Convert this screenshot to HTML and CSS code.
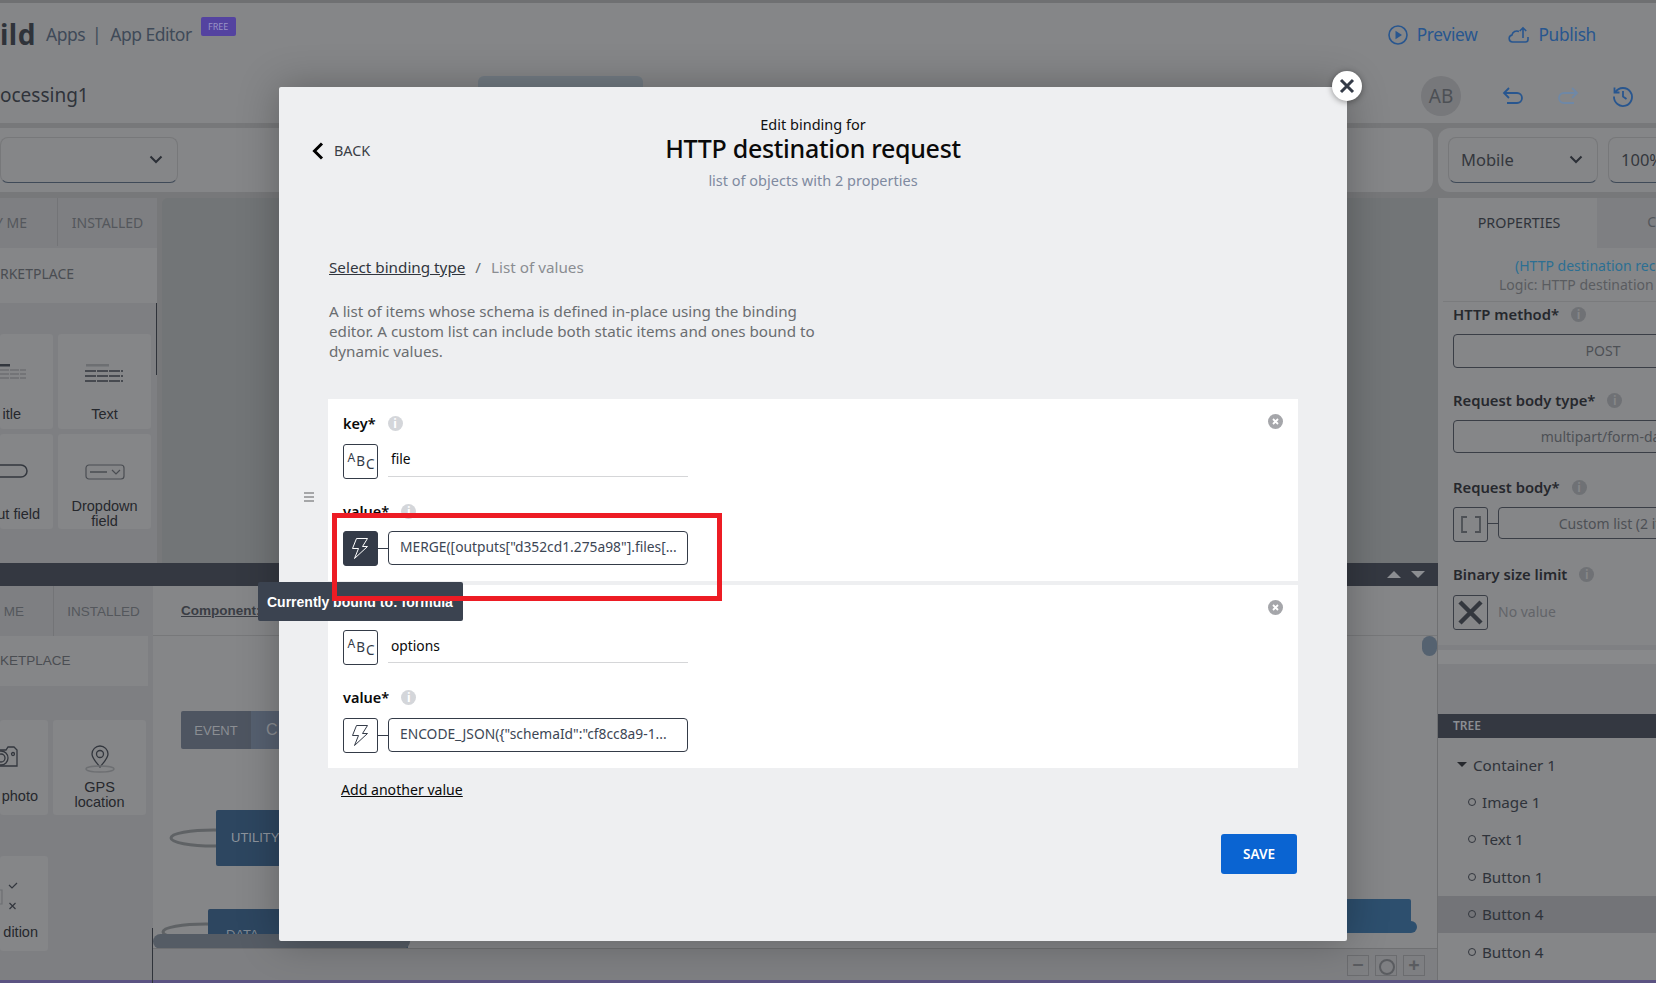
FILE: index.html
```html
<!DOCTYPE html>
<html lang="en">
<head>
    <meta charset="UTF-8">
    <title>App Editor - Edit binding</title>
    <link rel="stylesheet" href="styles.css">
</head>
<body>
<div class="app">
    <div class="top-line"></div>
    <header class="header">
        <div class="brand">
            <span class="brand-name">ild</span>
            <span class="brand-crumb">Apps</span>
            <span class="brand-crumb brand-sep">|</span>
            <span class="brand-crumb">App Editor</span>
            <span class="free-badge">FREE</span>
        </div>
        <div class="header-actions">
            <span class="header-action">
                <svg width="20" height="20" viewBox="0 0 20 20" fill="none" stroke="#28568f" stroke-width="1.6"><circle cx="10" cy="10" r="9"/><path d="M7.500 5.800 14 10l-6.500 4.200z" fill="#28568f" stroke="none"/></svg>
                Preview
            </span>
            <span class="header-action">
                <svg width="21" height="20" viewBox="0 0 21 20" fill="none" stroke="#28568f" stroke-width="1.6"><path d="M6 17H4.500a3.500 3.500 0 0 1-.6-6.900A5 5 0 0 1 11 6.500M20 12v2.500a2.500 2.500 0 0 1-2.500 2.500H6M15 13V3M11.800 6 15 2.800 18.200 6"/></svg>
                Publish
            </span>
        </div>
    </header>

    <div class="subheader">
        <span class="app-name">ocessing1</span>
        <span class="logic-tab"></span>
        <div class="subheader-tools">
            <span class="avatar">AB</span>
            <svg class="tool-icon" width="22" height="22" viewBox="0 0 22 22" fill="none" stroke="#28568f" stroke-width="1.8"><path d="M7 3 2 8l5 5M2 8h13a5 5 0 0 1 0 10H5"/></svg>
            <svg class="tool-icon" width="22" height="22" viewBox="0 0 22 22" fill="none" stroke="#6f88a6" stroke-width="1.800"><path d="m15 3 5 5-5 5M20 8H7a5 5 0 0 0 0 10h10"/></svg>
            <svg class="tool-icon" width="22" height="22" viewBox="0 0 22 22" fill="none" stroke="#28568f" stroke-width="1.8"><path d="M3.500 7A9 9 0 1 1 2 11.500M2.500 2.500V7.500H7.500M11 6v5.500l3.500 2.500"/></svg>
        </div>
    </div>

    <div class="toolbar">
        <div class="toolbar-left">
            <div class="select select-page">
                <svg class="chevron" width="14" height="9" viewBox="0 0 14 9" fill="none" stroke="#2b2f36" stroke-width="2"><path d="m1.500 1.500 5.500 5.500 5.500-5.500"/></svg>
            </div>
        </div>
        <div class="toolbar-right">
            <div class="select select-device">
                <span>Mobile</span>
                <svg class="chevron" width="14" height="9" viewBox="0 0 14 9" fill="none" stroke="#2b2f36" stroke-width="2"><path d="m1.500 1.500 5.500 5.500 5.500-5.500"/></svg>
            </div>
            <div class="select select-zoom"><span>100%</span></div>
        </div>
    </div>

    <div class="main">
        <div class="work">
            <div class="work-upper">
                <aside class="palette">
                    <div class="tabs">
                        <span class="tab tab-first">Y ME</span>
                        <span class="tab tab-second">INSTALLED</span>
                    </div>
                    <div class="market">RKETPLACE</div>
                    <div class="comp-grid">
                        <div class="comp comp-cut">
                            <svg width="26" height="22" viewBox="0 0 26 22" fill="none"><path d="M0 1h10" stroke="#33373e" stroke-width="3"/><path d="M0 6h26M0 10h26M0 14h26" stroke="#6d6f72" stroke-width="1.500" stroke-dasharray="9 1"/></svg>
                            <span class="comp-label comp-label-title">itle</span>
                        </div>
                        <div class="comp">
                            <svg width="40" height="22" viewBox="0 0 40 22" fill="none"><path d="M1 1h23" stroke="#6d6f72" stroke-width="3"/><path d="M0 7h38M0 12h38M0 17h38" stroke="#33373e" stroke-width="1.500" stroke-dasharray="11 1"/></svg>
                            <span class="comp-label">Text</span>
                        </div>
                        <div class="comp comp-cut">
                            <svg width="28" height="14" viewBox="0 0 28 14" fill="none" stroke="#33373e" stroke-width="1.500"><path d="M0 1h21a6 6 0 0 1 0 12H0"/></svg>
                            <span class="comp-label comp-label-input">ut field</span>
                        </div>
                        <div class="comp">
                            <svg width="40" height="16" viewBox="0 0 40 16" fill="none" stroke="#4a4d52" stroke-width="1.200"><rect x="1" y="1" width="38" height="14" rx="3"/><path d="M5 8h17" stroke-width="1.500"/><path d="m27 6 4 4 4-4"/></svg>
                            <span class="comp-label comp-label-two">Dropdown<br>field</span>
                        </div>
                    </div>
                    <span class="palette-scroll"></span>
                </aside>
                <div class="canvas-upper"></div>
            </div>

            <div class="split-bar">
                <span class="split-up"></span>
                <span class="split-down"></span>
            </div>

            <div class="work-lower">
                <aside class="palette palette-lower">
                    <div class="tabs tabs-lower">
                        <span class="tab tab-first">ME</span>
                        <span class="tab tab-second">INSTALLED</span>
                    </div>
                    <div class="market market-lower">KETPLACE</div>
                    <div class="comp-grid comp-grid-lower">
                        <div class="comp comp-cut">
                            <svg width="18" height="24" viewBox="0 0 18 24" fill="none" stroke="#33373e" stroke-width="1.300"><path d="M0 5h6l2-3h6l3 3v16H0"/><circle cx="1" cy="13" r="7"/><circle cx="1" cy="13" r="4"/><circle cx="13" cy="9" r="1.500"/></svg>
                            <span class="comp-label comp-label-low">photo</span>
                        </div>
                        <div class="comp">
                            <svg width="30" height="28" viewBox="0 0 30 28" fill="none" stroke="#33373e" stroke-width="1.300"><path d="M15 22c-5-6-8-9-8-13a8 8 0 0 1 16 0c0 4-3 7-8 13z"/><circle cx="15" cy="9" r="3.500"/><ellipse cx="15" cy="24" rx="14" ry="3" stroke="#6d6f72"/></svg>
                            <span class="comp-label comp-label-gps">GPS<br>location</span>
                        </div>
                        <div class="comp comp-cut">
                            <svg width="18" height="30" viewBox="0 0 18 30" fill="none" stroke="#33373e" stroke-width="1.200"><path d="m9 4 3 3 5-5M9.500 22l6 6m0-6-6 6"/><path d="M0 9h2v14H0" stroke="#6d6f72"/></svg>
                            <span class="comp-label comp-label-low">dition</span>
                        </div>
                    </div>
                    <span class="palette-scroll palette-scroll-lower"></span>
                </aside>
                <div class="canvas-lower">
                    <div class="canvas-tabs"><span class="canvas-crumb">Component: B</span></div>
                    <div class="event-switch"><span class="event-on">EVENT</span><span class="event-off">C</span></div>
                    <svg class="node-loop node-loop-a" width="60" height="30" viewBox="0 0 60 30" fill="none" stroke="#5f6265" stroke-width="3"><ellipse cx="45" cy="15" rx="43" ry="8"/></svg>
                    <div class="node node-utility">UTILITY</div>
                    <svg class="node-loop node-loop-b" width="60" height="20" viewBox="0 0 60 20" fill="none" stroke="#5f6265" stroke-width="3"><ellipse cx="45" cy="12" rx="43" ry="8"/></svg>
                    <div class="node node-data">DATA</div>
                    <div class="node node-right"><span class="node-port"></span></div>
                    <span class="canvas-thumb"></span>
                    <span class="canvas-hscroll"></span>
                    <div class="canvas-footer">
                        <span class="zoom-btn">&minus;</span>
                        <span class="zoom-btn zoom-btn-o"></span>
                        <span class="zoom-btn">+</span>
                    </div>
                </div>
            </div>
        </div>

        <aside class="props">
            <div class="props-tabs">
                <span class="props-tab">PROPERTIES</span>
                <span class="props-tab-off">C</span>
            </div>
            <div class="props-title">
                <div class="props-link">(HTTP destination rec</div>
                <div class="props-logic">Logic: HTTP destination</div>
            </div>
            <div class="props-fields">
                <div class="prop-label">HTTP method* <i class="info info-dim">i</i></div>
                <div class="prop-box prop-box-method">POST</div>
                <div class="prop-label">Request body type* <i class="info info-dim">i</i></div>
                <div class="prop-box prop-box-type">multipart/form-data</div>
                <div class="prop-label">Request body* <i class="info info-dim">i</i></div>
                <div class="prop-row">
                    <span class="prop-icon prop-icon-text">
                        <svg width="20" height="17" viewBox="0 0 20 17" fill="none" stroke="#4d5055" stroke-width="1.800"><path d="M6 1H1v15h5M14 1h5v15h-5"/></svg>
                    </span>
                    <span class="prop-link"></span>
                    <span class="prop-box prop-box-list">Custom list (2 items)</span>
                </div>
                <div class="prop-label">Binary size limit <i class="info info-dim">i</i></div>
                <div class="prop-row prop-row-last">
                    <span class="prop-icon">
                        <svg width="27" height="27" viewBox="0 0 27 27" fill="none" stroke="#33373e" stroke-width="4.500"><path d="m3 3 21 21M24 3 3 24"/></svg>
                    </span>
                    <span class="no-value">No value</span>
                </div>
            </div>
            <div class="props-rule"></div>
            <div class="props-gap"></div>
            <div class="tree-bar">TREE</div>
            <ul class="tree">
                <li class="tree-item tree-root"><span class="tree-caret"></span>Container 1</li>
                <li class="tree-item"><span class="tree-dot"></span>Image 1</li>
                <li class="tree-item"><span class="tree-dot"></span>Text 1</li>
                <li class="tree-item"><span class="tree-dot"></span>Button 1</li>
                <li class="tree-item tree-selected"><span class="tree-dot"></span>Button 4</li>
                <li class="tree-item"><span class="tree-dot"></span>Button 4</li>
            </ul>
        </aside>
    </div>
    <div class="bottom-strip"></div>
</div>

<div class="modal">
    <button class="modal-close">
        <svg width="16" height="16" viewBox="0 0 16 16" fill="none" stroke="#343b48" stroke-width="3"><path d="m2 2 12 12M14 2 2 14"/></svg>
    </button>

    <div class="modal-head">
        <div class="back">
            <svg width="12" height="18" viewBox="0 0 12 18" fill="none" stroke="#000" stroke-width="3"><path d="M10 1.500 2.500 9 10 16.500"/></svg>
            <span>BACK</span>
        </div>
        <div class="modal-title">
            <div class="title-small">Edit binding for</div>
            <h1 class="title-main">HTTP destination request</h1>
            <div class="title-sub">list of objects with 2 properties</div>
        </div>
    </div>

    <div class="crumbs">
        <a class="crumb-link">Select binding type</a>
        <span class="crumb-sep">/</span>
        <span class="crumb-now">List of values</span>
    </div>
    <p class="intro">A list of items whose schema is defined in-place using the binding editor. A custom list can include both static items and ones bound to dynamic values.</p>

    <div class="value-card">
        <span class="drag">
            <svg width="10" height="10" viewBox="0 0 10 10" fill="#a5a6a8"><rect width="10" height="2"/><rect y="4" width="10" height="2"/><rect y="8" width="10" height="2"/></svg>
        </span>
        <span class="card-remove">
            <svg width="15" height="15" viewBox="0 0 15 15"><circle cx="7.500" cy="7.500" r="7.500" fill="#a5a6aa"/><path d="m5 5 5 5m0-5-5 5" stroke="#fff" stroke-width="1.800"/></svg>
        </span>
        <div class="field-label">key* <i class="info">i</i></div>
        <div class="field-row">
            <span class="type-box"><span class="abc"><span>A</span><span>B</span><span>C</span></span></span>
            <span class="key-input">file</span>
        </div>
        <div class="field-label field-label-value">value* <i class="info">i</i></div>
        <div class="field-row">
            <span class="type-box type-box-on">
                <svg width="17" height="22" viewBox="-0.500 -0.500 17 22" fill="none" stroke="#fff" stroke-width="1"><path d="M4 0h11l-5 8h5L2 20l4-10H0z"/></svg>
            </span>
            <span class="type-link"></span>
            <span class="formula-box">MERGE([outputs["d352cd1.275a98"].files[...</span>
        </div>
    </div>

    <div class="value-card value-card-second">
        <span class="card-remove">
            <svg width="15" height="15" viewBox="0 0 15 15"><circle cx="7.500" cy="7.500" r="7.500" fill="#a5a6aa"/><path d="m5 5 5 5m0-5-5 5" stroke="#fff" stroke-width="1.800"/></svg>
        </span>
        <div class="field-label">key* <i class="info">i</i></div>
        <div class="field-row">
            <span class="type-box"><span class="abc"><span>A</span><span>B</span><span>C</span></span></span>
            <span class="key-input">options</span>
        </div>
        <div class="field-label field-label-value">value* <i class="info">i</i></div>
        <div class="field-row">
            <span class="type-box">
                <svg width="17" height="22" viewBox="-0.500 -0.500 17 22" fill="none" stroke="#343b48" stroke-width="1"><path d="M4 0h11l-5 8h5L2 20l4-10H0z"/></svg>
            </span>
            <span class="type-link"></span>
            <span class="formula-box">ENCODE_JSON({"schemaId":"cf8cc8a9-1...</span>
        </div>
    </div>

    <a class="add-value">Add another value</a>
    <div class="modal-foot"><button class="save">SAVE</button></div>

    <div class="bound-tip">Currently bound to: formula</div>
    <div class="red-mark"></div>
</div>
</body>
</html>
```

FILE: styles.css
```css
* {
    box-sizing: border-box;
}

html, body {
    margin: 0;
    height: 983px;
    overflow: hidden;
}

body {
    font-family: "Noto Sans", sans-serif;
    color: #2f333a;
    background: #77787a;
    position: relative;
}

.app {
    width: 1656px;
    height: 983px;
    display: flex;
    flex-direction: column;
    overflow: hidden;
    background: #77787a;
}

.top-line {
    height: 3px;
    background: #6f7072;
}

/* header */
.header {
    height: 65px;
    background: #858688;
    display: flex;
    justify-content: space-between;
    align-items: center;
    padding: 0 60px 2px 0;
}

.brand {
    display: flex;
    align-items: center;
    padding-bottom: 2px;
}

.brand-name {
    font-size: 28px;
    font-weight: 700;
    line-height: 30px;
    color: #2f333a;
    width: 46px;
    letter-spacing: 0.5px;
}

.brand-crumb {
    font-size: 17.500px;
    color: #3f4a58;
    letter-spacing: -0.5px;
}

.brand-sep {
    margin: 0 9px 0 7px;
}

.free-badge {
    background: #5443a0;
    color: #9a94c6;
    font-size: 9px;
    line-height: 19px;
    width: 35px;
    text-align: center;
    border-radius: 2px;
    margin: -15px 0 0 9px;
}

.header-actions {
    display: flex;
    gap: 31px;
}

.header-action {
    display: flex;
    align-items: center;
    gap: 9px;
    font-size: 17.300px;
    color: #28568f;
    letter-spacing: -0.3px;
}

.subheader {
    height: 55px;
    background: #858688;
    display: flex;
    align-items: center;
    position: relative;
    padding-right: 22px;
}

.app-name {
    font-size: 19px;
    color: #2f333a;
    margin-top: -1px;
}

.logic-tab {
    position: absolute;
    left: 478px;
    top: 8px;
    width: 165px;
    height: 20px;
    border-radius: 6px 6px 0 0;
    background: #727b83;
}

.subheader-tools {
    margin-left: auto;
    display: flex;
    align-items: center;
    gap: 33px;
}

.avatar {
    width: 40px;
    height: 40px;
    border-radius: 50%;
    background: #77787b;
    color: #4d5055;
    font-size: 19px;
    display: flex;
    align-items: center;
    justify-content: center;
    margin-right: 8px;
}

/* toolbar */
.toolbar {
    margin-top: 5px;
    height: 64px;
    display: flex;
    gap: 5px;
}

.toolbar-left {
    width: 1433px;
    flex-shrink: 0;
    background: #858688;
    border-radius: 0 12px 12px 0;
    padding-top: 9px;
}

.toolbar-right {
    flex: 1;
    min-width: 0;
    overflow: hidden;
    background: #858688;
    border-radius: 12px 0 0 12px;
    padding: 9px 0 0 10px;
    display: flex;
    gap: 10px;
}

.select {
    height: 46px;
    border: 1px solid #77787a;
    border-bottom: 1px solid #3f4a58;
    border-radius: 8px;
    display: flex;
    align-items: center;
    justify-content: space-between;
    font-size: 16.500px;
    color: #34373d;
    padding: 0 14px 2px 12px;
    flex-shrink: 0;
}

.select-page {
    width: 178px;
    justify-content: flex-end;
}

.select-device {
    width: 150px;
}

.select-zoom {
    width: 80px;
}

/* work area */
.main {
    margin-top: 6px;
    height: 782px;
    display: flex;
}

.work {
    width: 1438px;
    flex-shrink: 0;
    display: flex;
    flex-direction: column;
}

.work-upper {
    height: 365px;
    display: flex;
    gap: 5px;
}

.palette {
    width: 157px;
    flex-shrink: 0;
    background: #7e7f82;
    position: relative;
    display: flex;
    flex-direction: column;
}

.tabs {
    height: 50px;
    display: flex;
    flex-shrink: 0;
    background: #7e7f82;
    padding-bottom: 2px;
}

.tab {
    display: flex;
    align-items: center;
    font-size: 14px;
    color: #54575c;
}

.tab-first {
    width: 58px;
    justify-content: flex-end;
    padding-right: 30px;
    border-right: 1px solid #737477;
    white-space: nowrap;
}

.tab-second {
    flex: 1;
    justify-content: center;
}

.market {
    height: 55px;
    background: #858688;
    font-size: 14px;
    color: #4a4d52;
    display: flex;
    align-items: center;
    flex-shrink: 0;
    padding-bottom: 4px;
}

.comp-grid {
    display: grid;
    grid-template-columns: 53px 93px;
    grid-auto-rows: 95px;
    gap: 5px;
    padding-top: 31px;
}

.comp {
    background: #858688;
    border-radius: 3px;
    display: flex;
    flex-direction: column;
    align-items: center;
    font-family: "Liberation Sans", Arial, sans-serif;
    font-size: 14.500px;
    line-height: 15px;
    color: #26282d;
    text-align: center;
    padding-top: 30px;
    position: relative;
    overflow: hidden;
}

.comp-label {
    position: absolute;
    top: 73px;
    left: 0;
    right: 0;
}

.comp-label-two {
    top: 65px;
}

.comp-cut {
    align-items: flex-start;
}

.comp-cut .comp-label {
    left: auto;
    white-space: nowrap;
}

.comp-cut .comp-label-title {
    right: 32px;
}

.comp-cut .comp-label-input {
    right: 13px;
}

.comp-cut .comp-label-low {
    right: 10px;
}

.palette-scroll {
    position: absolute;
    left: 156px;
    top: 105px;
    width: 1px;
    height: 72px;
    background: #2f333a;
}

.canvas-upper {
    flex: 1;
    border-radius: 6px 0 0 0;
    background: #727577;
}

.split-bar {
    height: 23px;
    background: #343841;
    display: flex;
    justify-content: flex-end;
    align-items: center;
    gap: 10px;
    padding-right: 13px;
}

.split-up, .split-down {
    width: 0;
    height: 0;
    border-left: 7px solid transparent;
    border-right: 7px solid transparent;
}

.split-up {
    border-bottom: 7px solid #8c8e92;
}

.split-down {
    border-top: 7px solid #8c8e92;
}

.work-lower {
    flex: 1;
    display: flex;
}

.palette-lower {
    width: 153px;
    background: #7e7f82;
}

.tabs-lower {
    padding-bottom: 0;
}

.tabs-lower .tab {
    font-family: "Liberation Sans", Arial, sans-serif;
    font-size: 13.500px;
    font-weight: 400;
}

.tabs-lower .tab-first {
    width: 54px;
    padding-right: 29px;
}

.market-lower {
    width: 148px;
    height: 50px;
    font-family: "Liberation Sans", Arial, sans-serif;
    font-size: 13.500px;
    background: #858688;
    padding-bottom: 2px;
}

.comp-grid-lower {
    grid-template-columns: 48px 93px;
    padding-top: 34px;
    row-gap: 41px;
}

.comp-grid-lower .comp {
    padding-top: 25px;
}

.comp-grid-lower .comp-label {
    top: 69px;
}

.comp-grid-lower .comp-label-gps {
    top: 60px;
}

.palette-scroll-lower {
    left: 152px;
    top: 342px;
    height: 55px;
}

.canvas-lower {
    flex: 1;
    background: #858688;
    border-right: 1px solid #6f7072;
    position: relative;
    overflow: hidden;
}

.canvas-tabs {
    height: 50px;
    border-bottom: 1px solid #77787a;
    display: flex;
    align-items: center;
    padding-left: 28px;
}

.canvas-crumb {
    font-family: "Liberation Sans", Arial, sans-serif;
    font-size: 13.500px;
    font-weight: 700;
    color: #3a3d44;
    text-decoration: underline;
}

.event-switch {
    position: absolute;
    left: 28px;
    top: 125px;
    display: flex;
    height: 38px;
    font-family: "Liberation Sans", Arial, sans-serif;
    font-size: 13px;
    color: #8b8e93;
}

.event-on {
    width: 70px;
    background: #4e5561;
    border-radius: 2px 0 0 2px;
    display: flex;
    align-items: center;
    justify-content: center;
}

.event-off {
    width: 60px;
    background: #566070;
    padding-left: 15px;
    font-size: 16px;
    line-height: 38px;
}

.node-loop {
    position: absolute;
}

.node-loop-a {
    left: 16px;
    top: 237px;
}

.node-loop-b {
    left: 8px;
    top: 334px;
}

.node {
    position: absolute;
    background: #2d4660;
    border-radius: 2px;
    font-family: "Liberation Sans", Arial, sans-serif;
    font-size: 13px;
    color: #8d949d;
}

.node-utility {
    left: 63px;
    top: 224px;
    width: 150px;
    height: 56px;
    line-height: 56px;
    padding-left: 15px;
}

.node-data {
    left: 55px;
    top: 323px;
    width: 200px;
    height: 40px;
    line-height: 52px;
    padding-left: 18px;
    color: #7f8892;
}

.node-right {
    left: 1150px;
    top: 313px;
    width: 108px;
    height: 34px;
    background: #2d4f6e;
}

.node-port {
    position: absolute;
    right: -6px;
    bottom: 0;
    width: 14px;
    height: 12px;
    border-radius: 0 6px 6px 0;
    background: #2d4f6e;
}

.canvas-thumb {
    position: absolute;
    right: 0;
    top: 50px;
    width: 15px;
    height: 20px;
    border-radius: 8px;
    background: #556270;
}

.canvas-hscroll {
    position: absolute;
    left: 0;
    top: 348px;
    width: 257px;
    height: 15px;
    border-radius: 8px;
    background: #555c65;
}

.canvas-footer {
    position: absolute;
    left: 0;
    right: 0;
    bottom: 0;
    height: 32px;
    background: #7e7f82;
    border-top: 1px solid #6f7072;
    display: flex;
    justify-content: flex-end;
    gap: 6px;
    padding: 6px 12px 0 0;
}

.zoom-btn {
    width: 22px;
    height: 21px;
    border: 1px solid #6b6c6f;
    color: #5a5c60;
    font-size: 20px;
    font-weight: 700;
    line-height: 18px;
    text-align: center;
}

.zoom-btn-o {
    position: relative;
}

.zoom-btn-o::after {
    content: "";
    position: absolute;
    left: 3px;
    top: 3px;
    width: 12px;
    height: 12px;
    border-radius: 50%;
    border: 2px solid #5a5c60;
}

/* properties */
.props {
    flex: 1;
    min-width: 0;
    overflow: hidden;
    background: #858688;
    font-size: 14px;
}

.props-tabs {
    height: 50px;
    display: flex;
    background: #7e7f82;
}

.props-tab {
    width: 165px;
    background: #858688;
    display: flex;
    align-items: center;
    justify-content: center;
    color: #2f333a;
    font-size: 14.300px;
    padding: 0 0 2px 3px;
}

.props-tab-off {
    margin-left: 50px;
    line-height: 48px;
    color: #54575c;
}

.props-title {
    height: 54px;
    border-bottom: 1px solid #7a7b7d;
    margin-left: 5px;
    padding-top: 8px;
    white-space: nowrap;
    line-height: 19px;
    overflow: hidden;
}

.props-link {
    color: #2c6f93;
    margin-left: 72px;
}

.props-logic {
    color: #5a5c60;
    margin-left: 56px;
}

.props-fields {
    padding: 2px 0 0 15px;
    height: 343px;
}

.prop-label {
    font-size: 14.800px;
    font-weight: 600;
    line-height: 20px;
    color: #26282d;
    display: flex;
    align-items: center;
    gap: 12px;
    white-space: nowrap;
}

.prop-box {
    display: block;
    height: 34px;
    border: 1px solid #3a3e46;
    border-radius: 4px;
    text-align: center;
    line-height: 32px;
    color: #4d5055;
    white-space: nowrap;
    overflow: hidden;
}

.prop-box-method {
    width: 300px;
    margin: 10px 0 22px;
}

.prop-box-type {
    width: 308px;
    margin: 10px 0 24px;
    height: 33px;
}

.prop-row {
    display: flex;
    align-items: flex-start;
    margin: 10px 0 22px;
}

.prop-row-last {
    margin-top: 11px;
}

.prop-icon {
    width: 35px;
    height: 35px;
    border: 1px solid #3a3e46;
    border-radius: 3px;
    display: flex;
    align-items: center;
    justify-content: center;
    flex-shrink: 0;
}

.prop-link {
    width: 10px;
    height: 1px;
    margin-top: 16px;
    background: #3a3e46;
    flex-shrink: 0;
}

.prop-box-list {
    width: 255px;
    height: 32px;
    line-height: 32px;
    flex-shrink: 0;
}

.no-value {
    margin: 7px 0 0 10px;
    color: #626468;
}

.props-rule {
    height: 5px;
    background: #7f8083;
}

.props-gap {
    height: 14px;
    background: #88898b;
}

.tree-bar {
    border-top: 50px solid #7f8083;
    height: 74px;
    background: #343841;
    color: #8b8e93;
    font-size: 12px;
    font-weight: 600;
    line-height: 24px;
    padding-left: 15px;
}

.tree {
    list-style: none;
    margin: 0;
    padding: 8px 0 0;
}

.tree-item {
    height: 37.400px;
    display: flex;
    align-items: center;
    padding-left: 30px;
    font-size: 15.200px;
    color: #2f333a;
    gap: 6px;
}

.tree-root {
    padding-left: 19px;
    gap: 6px;
}

.tree-selected {
    background: #737478;
}

.tree-caret {
    width: 0;
    height: 0;
    border-left: 5px solid transparent;
    border-right: 5px solid transparent;
    border-top: 5px solid #26282d;
}

.tree-dot {
    width: 8px;
    height: 8px;
    border: 1.500px solid #33373e;
    border-radius: 50%;
}

.bottom-strip {
    height: 3px;
    background: #5b5382;
}

/* modal */
.modal {
    position: absolute;
    left: 279px;
    top: 87px;
    width: 1068px;
    height: 854px;
    background: #eeeff1;
    border-radius: 2px;
    box-shadow: 0 0 40px rgba(0, 0, 0, 0.28);
    padding: 27px 49px 0;
    color: #32363e;
}

.modal-close {
    position: absolute;
    right: -15px;
    top: -16px;
    width: 30px;
    height: 30px;
    border: none;
    border-radius: 50%;
    background: #fff;
    box-shadow: 0 1px 6px rgba(0, 0, 0, 0.4);
    padding: 0;
    display: flex;
    align-items: center;
    justify-content: center;
}

.modal-head {
    position: relative;
    text-align: center;
}

.back {
    position: absolute;
    left: -16px;
    top: 27px;
    display: flex;
    align-items: center;
    gap: 10px;
    font-size: 14.400px;
    line-height: 20px;
    color: #3a3e46;
}

.title-small {
    font-size: 14.500px;
    line-height: 20px;
    color: #111;
}

.title-main {
    margin: -1px 0 0;
    font-size: 25px;
    font-weight: 500;
    line-height: 30px;
    letter-spacing: -0.3px;
    color: #0a0a0a;
}

.title-sub {
    margin-top: 7px;
    font-size: 14.500px;
    line-height: 20px;
    color: #7f8aa0;
}

.crumbs {
    margin: 67px 0 0 1px;
    font-size: 15.250px;
    line-height: 20px;
}

.crumb-link {
    color: #32363e;
    text-decoration: underline;
}

.crumb-sep {
    color: #6a6d70;
    margin: 0 6px;
}

.crumb-now {
    color: #8a8d92;
}

.intro {
    margin: 24px 0 0 1px;
    width: 500px;
    font-size: 15.200px;
    line-height: 20px;
    color: #6a6d70;
}

.value-card {
    position: relative;
    margin-top: 38px;
    height: 182px;
    background: #fff;
    padding: 14px 15px 0;
}

.value-card-second {
    margin-top: 4px;
    height: 183px;
}

.drag {
    position: absolute;
    left: -24px;
    top: 86px;
}

.card-remove {
    position: absolute;
    right: 15px;
    top: 13px;
}

.field-label {
    font-size: 14.500px;
    font-weight: 600;
    line-height: 20px;
    color: #0a0a0a;
    display: flex;
    align-items: center;
    gap: 12px;
}

.field-label-value {
    margin-top: 22px;
}

.info {
    width: 15px;
    height: 15px;
    border-radius: 50%;
    background: #d4d6da;
    color: #fff;
    font-size: 12px;
    font-style: normal;
    font-weight: 700;
    line-height: 15px;
    text-align: center;
}

.info-dim {
    background: #6f7175;
    color: #858688;
}

.field-row {
    display: flex;
    align-items: flex-start;
    margin-top: 11px;
}

.field-label-value + .field-row {
    margin-top: 10px;
}

.value-card-second .field-label-value + .field-row {
    margin-top: 11px;
}

.type-box {
    width: 35px;
    height: 35px;
    border: 1px solid #343b48;
    border-radius: 3px;
    display: flex;
    align-items: center;
    justify-content: center;
    background: #fff;
    flex-shrink: 0;
}

.type-box-on {
    background: #343b48;
}

.abc {
    display: flex;
    align-items: flex-start;
    height: 22px;
    font-size: 13.500px;
    line-height: 14px;
    color: #343b48;
    gap: 1px;
    margin-left: 1px;
}

.abc span:nth-child(1) {
    font-size: 12px;
}

.abc span:nth-child(2) {
    margin-top: 3px;
}

.abc span:nth-child(3) {
    margin-top: 6px;
}

.key-input {
    width: 300px;
    height: 33px;
    margin-left: 10px;
    padding-left: 3px;
    border-bottom: 1px solid #d5d6d8;
    font-size: 13.800px;
    line-height: 29px;
    color: #0a0a0a;
}

.value-card-second .key-input {
    line-height: 31px;
}

.type-link {
    width: 10px;
    height: 1px;
    margin-top: 17px;
    background: #343b48;
    flex-shrink: 0;
}

.formula-box {
    width: 300px;
    height: 34px;
    border: 1px solid #343b48;
    border-radius: 4px;
    padding-left: 11px;
    font-size: 13.800px;
    line-height: 30px;
    color: #3c4654;
    white-space: nowrap;
    overflow: hidden;
}

.add-value {
    display: block;
    margin: 12px 0 0 13px;
    font-size: 14.100px;
    line-height: 20px;
    color: #0a0a0a;
    text-decoration: underline;
}

.modal-foot {
    display: flex;
    justify-content: flex-end;
    margin-top: 34px;
    padding-right: 1px;
}

.save {
    width: 76px;
    height: 40px;
    border: none;
    border-radius: 3px;
    background: #0a64d2;
    color: #fff;
    font-family: "Noto Sans", sans-serif;
    font-size: 13.500px;
    font-weight: 600;
}

.bound-tip {
    position: absolute;
    left: -21px;
    top: 495px;
    width: 205px;
    height: 39px;
    background: #3b4350;
    border-radius: 2px;
    color: #fff;
    font-family: "Liberation Sans", Arial, sans-serif;
    font-size: 14px;
    font-weight: 700;
    line-height: 41px;
    padding-left: 9px;
    white-space: nowrap;
}

.red-mark {
    position: absolute;
    left: 53px;
    top: 426px;
    width: 390px;
    height: 88px;
    border: 5px solid #ed1c24;
}
```
